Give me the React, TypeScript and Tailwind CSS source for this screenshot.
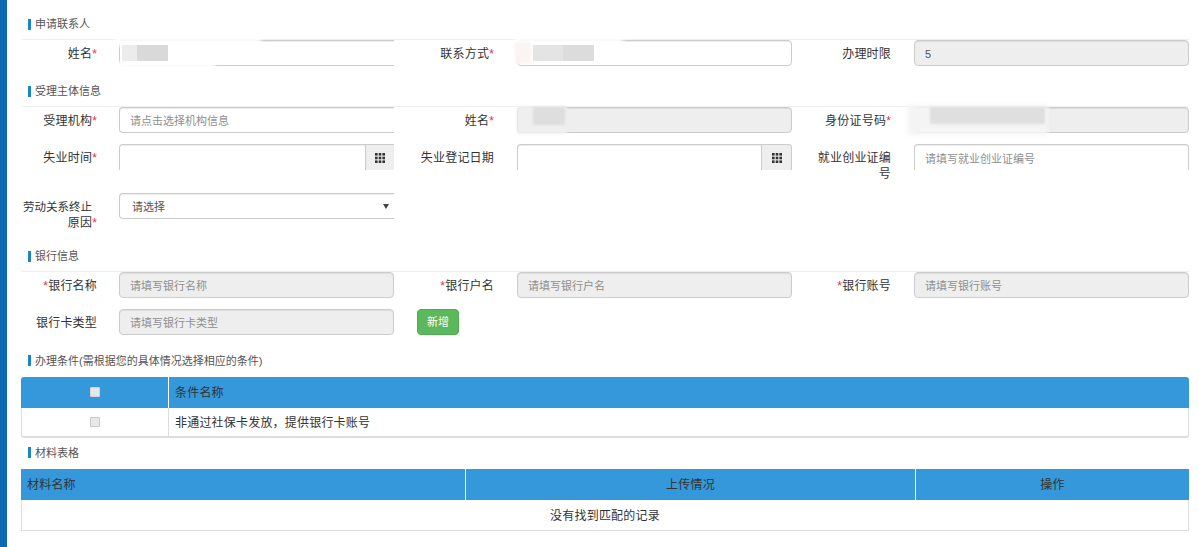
import React from "react";

const Star = () => <span className="text-[#e8304a]">*</span>;

function Section({ title, line = true }: { title: string; line?: boolean }) {
  return (
    <div className={`h-[30px] flex items-center pl-[7px] pb-px ${line ? "border-b border-[#f0f0f0]" : ""}`}>
      <span className="w-[3px] h-[11px] bg-[#1a85c8] mr-[4px]" />
      <span className="text-[11px] text-[#555]">{title}</span>
    </div>
  );
}

function Label({ children, w = 100 }: { children: React.ReactNode; w?: number }) {
  return (
    <div
      className={`${w === 98 ? "w-[98px] pr-[22px]" : "w-[100px] pr-[23px]"} shrink-0 text-right text-[12px] leading-[16px] tracking-[0.2px] text-[#333] pt-[6px]`}
    >
      {children}
    </div>
  );
}

const boxBase =
  "block w-full h-[26px] border border-[#ccc] px-[10px] pt-[2px] text-[11px] text-[#555] placeholder:text-[#8f8f8f] outline-none shadow-[inset_0_1px_1px_rgba(0,0,0,0.075)]";

function Box({
  placeholder,
  value,
  disabled,
  cutRight,
  noBottom,
  children,
}: {
  placeholder?: string;
  value?: string;
  disabled?: boolean;
  cutRight?: boolean;
  noBottom?: boolean;
  children?: React.ReactNode;
}) {
  return (
    <div className="relative w-[275px] shrink-0">
      <input
        readOnly
        placeholder={placeholder}
        defaultValue={value}
        className={`${boxBase} ${disabled ? "bg-[#eeeeee]" : "bg-white"} ${cutRight ? "rounded-l-[4px] border-r-0" : "rounded-[4px]"} ${noBottom ? "border-b-0 rounded-b-none" : ""}`}
      />
      {children}
    </div>
  );
}

const ThIcon = () => (
  <svg width="10" height="10" viewBox="0 0 10 10" fill="#333">
    <rect x="0" y="0" width="2.6" height="2.6" />
    <rect x="3.7" y="0" width="2.6" height="2.6" />
    <rect x="7.4" y="0" width="2.6" height="2.6" />
    <rect x="0" y="3.7" width="2.6" height="2.6" />
    <rect x="3.7" y="3.7" width="2.6" height="2.6" />
    <rect x="7.4" y="3.7" width="2.6" height="2.6" />
    <rect x="0" y="7.4" width="2.6" height="2.6" />
    <rect x="3.7" y="7.4" width="2.6" height="2.6" />
    <rect x="7.4" y="7.4" width="2.6" height="2.6" />
  </svg>
);

function DateBox({ cutRight }: { cutRight?: boolean }) {
  return (
    <div className="relative flex w-[275px] shrink-0 h-[26px]">
      <input
        readOnly
        className="flex-1 min-w-0 h-[26px] border border-b-0 border-r-0 border-[#ccc] rounded-tl-[4px] bg-white outline-none shadow-[inset_0_1px_1px_rgba(0,0,0,0.075)]"
      />
      <div
        className={`${cutRight ? "w-[29px]" : "w-[31px] border-r rounded-tr-[4px]"} flex items-center justify-center bg-[#eeeeee] border-l border-t border-[#ccc]`}
      >
        <ThIcon />
      </div>
    </div>
  );
}

const Row = ({ children }: { children: React.ReactNode }) => (
  <div className="grid grid-cols-[396px_397px_375px] mb-[11px]">{children}</div>
);

const Field = ({ children }: { children: React.ReactNode }) => <div className="flex items-start">{children}</div>;

const Check = ({ head }: { head?: boolean }) => (
  <input
    type="checkbox"
    readOnly
    className={`appearance-none block mx-auto w-[10px] h-[10px] rounded-[1px] border ${head ? "bg-[#e6e6e6] border-[#d5d5d5] -mt-[2px]" : "bg-[#e9e9e9] border-[#c8c8c8]"}`}
  />
);

export default function App() {
  return (
    <div className="flex h-screen overflow-hidden bg-white font-['Liberation_Sans','Noto_Sans_CJK_SC',sans-serif]">
      <div className="w-[7px] shrink-0 bg-[#0a69b2]" />
      <main className="flex-1 pl-[14px] pr-[10px] pt-[10px]">
        <Section title="申请联系人" />
        <Row>
          <Field>
            <Label w={98}>姓名<Star /></Label>
            <Box cutRight>
              <div className="absolute left-[-4px] top-[-2px] w-[146px] h-[8px] bg-white blur-[2px]" />
              <div className="absolute left-[-4px] bottom-[-3px] w-[100px] h-[7px] bg-white blur-[2px]" />
              <div className="absolute left-[3px] top-[5px] w-[15px] h-[16px] bg-[#ececec] blur-[0.5px]" />
              <div className="absolute left-[18px] top-[5px] w-[31px] h-[16px] bg-[#d9d9d9] blur-[0.5px]" />
            </Box>
          </Field>
          <Field>
            <Label>联系方式<Star /></Label>
            <Box>
              <div className="absolute left-[-2px] top-[-2px] w-[108px] h-[8px] bg-white blur-[2px]" />
              <div className="absolute left-[-2px] top-[2px] w-[16px] h-[22px] bg-[#faf5f2] blur-[1px]" />
              <div className="absolute left-[16px] top-[5px] w-[30px] h-[16px] bg-[#e4e4e4] blur-[0.5px]" />
              <div className="absolute left-[46px] top-[5px] w-[31px] h-[16px] bg-[#dcdcdc] blur-[0.5px]" />
            </Box>
          </Field>
          <Field>
            <Label>办理时限</Label>
            <Box disabled value="5" />
          </Field>
        </Row>

        <Section title="受理主体信息" />
        <Row>
          <Field>
            <Label w={98}>受理机构<Star /></Label>
            <Box cutRight placeholder="请点击选择机构信息" />
          </Field>
          <Field>
            <Label>姓名<Star /></Label>
            <Box disabled>
              <div className="absolute left-0 top-[-1px] w-[50px] h-[28px] bg-[#efefef] blur-[1px]" />
              <div className="absolute left-[16px] top-0 w-[32px] h-[18px] bg-[#dedede] blur-[1px]" />
            </Box>
          </Field>
          <Field>
            <Label>身份证号码<Star /></Label>
            <Box disabled>
              <div className="absolute left-[-6px] top-[-2px] w-[140px] h-[30px] bg-[#f4f4f4] blur-[2px]" />
              <div className="absolute left-[16px] top-0 w-[115px] h-[17px] bg-[#dfdfdf] blur-[1px]" />
            </Box>
          </Field>
        </Row>
        <Row>
          <Field>
            <Label w={98}>失业时间<Star /></Label>
            <DateBox cutRight />
          </Field>
          <Field>
            <Label>失业登记日期</Label>
            <DateBox />
          </Field>
          <Field>
            <Label>就业创业证编号</Label>
            <Box noBottom placeholder="请填写就业创业证编号" />
          </Field>
        </Row>
        <Row>
          <Field>
            <Label w={98}>
              <span className="block whitespace-nowrap pr-[5px] text-[11.5px] tracking-normal">劳动关系终止</span>
              <span className="block">原因<Star /></span>
            </Label>
            <div className="relative w-[275px] shrink-0">
              <select className="block w-full h-[26px] appearance-none border border-r-0 border-[#ccc] rounded-l-[4px] bg-white pl-[12px] pt-[2px] text-[11px] text-[#555] outline-none shadow-[inset_0_1px_1px_rgba(0,0,0,0.075)]">
                <option>请选择</option>
              </select>
              <span className="absolute right-[5px] top-[11px] w-0 h-0 border-x-[3px] border-x-transparent border-t-[5px] border-t-[#444]" />
            </div>
          </Field>
        </Row>

        <Section title="银行信息" />
        <Row>
          <Field>
            <Label w={98}><Star />银行名称</Label>
            <Box disabled placeholder="请填写银行名称" />
          </Field>
          <Field>
            <Label><Star />银行户名</Label>
            <Box disabled placeholder="请填写银行户名" />
          </Field>
          <Field>
            <Label><Star />银行账号</Label>
            <Box disabled placeholder="请填写银行账号" />
          </Field>
        </Row>
        <Row>
          <Field>
            <Label w={98}>银行卡类型</Label>
            <Box disabled placeholder="请填写银行卡类型" />
          </Field>
          <div>
            <button className="w-[42px] h-[26px] rounded-[4px] bg-[#5cb85c] border border-[#4cae4c] text-white text-[11px]">
              新增
            </button>
          </div>
        </Row>

        <Section title="办理条件(需根据您的具体情况选择相应的条件)" line={false} />
        <table className="w-[1168px] table-fixed border-separate border-spacing-0 text-[12px] tracking-[0.2px] text-[#333] mt-px">
          <colgroup>
            <col className="w-[148px]" />
            <col />
          </colgroup>
          <thead>
            <tr className="bg-[#3498db] h-[31px]">
              <th className="font-normal border-r border-white rounded-tl-[3px]"><Check head /></th>
              <th className="font-normal text-left pl-[6px] rounded-tr-[3px]">条件名称</th>
            </tr>
          </thead>
          <tbody>
            <tr className="h-[30px]">
              <td className="border-l border-b-2 border-r border-[#dddddd] rounded-bl-[3px]"><Check /></td>
              <td className="border-b-2 border-r border-[#dddddd] pl-[6px] pt-px rounded-br-[3px]">非通过社保卡发放，提供银行卡账号</td>
            </tr>
          </tbody>
        </table>

        <Section title="材料表格" line={false} />
        <table className="w-[1168px] table-fixed border-separate border-spacing-0 text-[12px] tracking-[0.2px] text-[#333] mt-px">
          <colgroup>
            <col className="w-[445px]" />
            <col className="w-[450px]" />
            <col />
          </colgroup>
          <thead>
            <tr className="bg-[#3498db] h-[31px]">
              <th className="font-normal text-left pl-[6px] border-r border-white">材料名称</th>
              <th className="font-normal border-r border-white">上传情况</th>
              <th className="font-normal">操作</th>
            </tr>
          </thead>
          <tbody>
            <tr className="h-[31px]">
              <td colSpan={3} className="text-center pt-px border-l border-r border-b border-[#dddddd]">没有找到匹配的记录</td>
            </tr>
          </tbody>
        </table>
      </main>
    </div>
  );
}
